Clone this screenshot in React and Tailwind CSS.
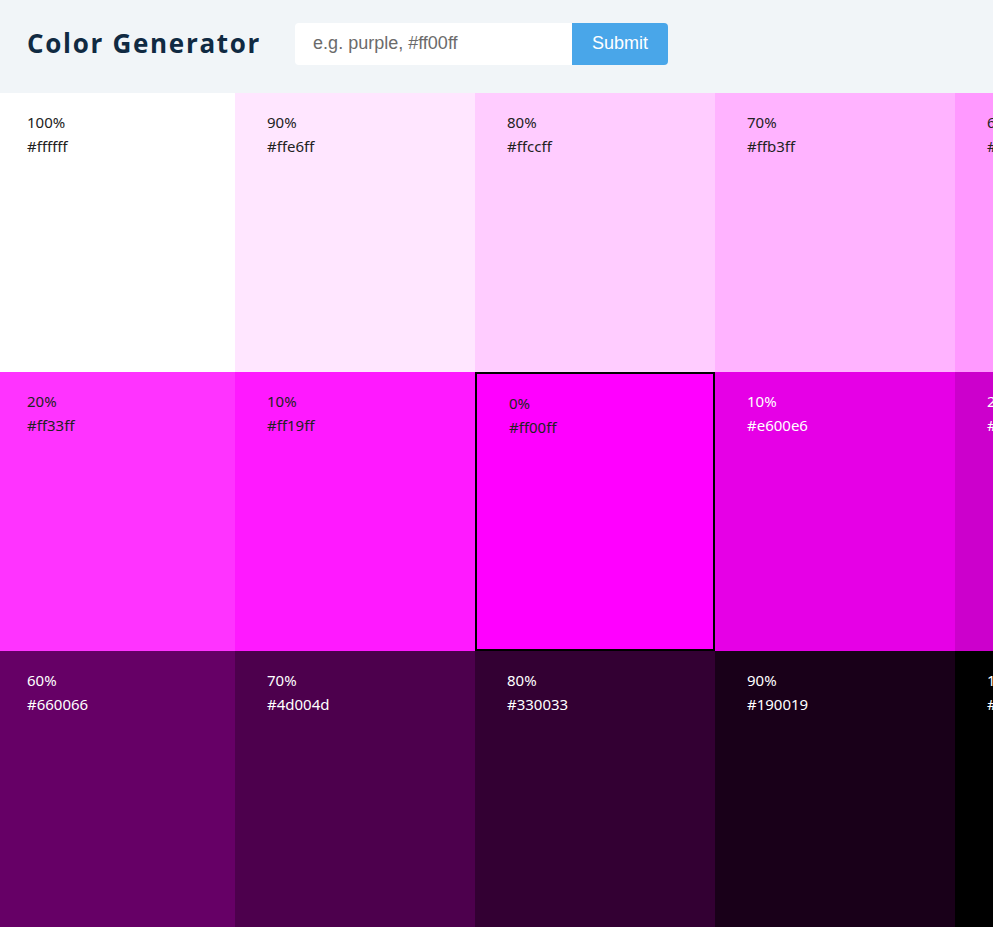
import React from "react";

const base = [255, 0, 255];
function hex(c) {
  return "#" + c.map((v) => v.toString(16).padStart(2, "0")).join("");
}
function build() {
  const out = [];
  for (let i = 10; i >= 1; i--) {
    const w = i / 10;
    const c = base.map((v) => Math.round(v + (255 - v) * w));
    out.push({ pct: i * 10, c: hex(c), type: "tint" });
  }
  out.push({ pct: 0, c: "#ff00ff", type: "base" });
  for (let i = 1; i <= 10; i++) {
    const w = i / 10;
    const c = base.map((v) => Math.round(v * (1 - w)));
    out.push({ pct: i * 10, c: hex(c), type: "shade" });
  }
  return out;
}
const list = build();
const fix = { "#ff1aff": "#ff19ff", "#1a001a": "#190019" };

export default function App() {
  return (
    <div className="min-h-screen w-full overflow-hidden bg-white font-['Noto_Sans','Open_Sans',sans-serif]">
      <header className="flex h-[93px] items-center bg-[#f1f5f8] px-[27px] pb-[6px]">
        <h3 className="mr-[34px] font-['Open_Sans','Noto_Sans',sans-serif] text-[26px] font-bold tracking-[1.7px] text-[#102a42]">
          Color Generator
        </h3>
        <form className="flex" onSubmit={(e) => e.preventDefault()}>
          <input
            type="text"
            placeholder="e.g. purple, #ff00ff"
            className="h-[42px] w-[277px] rounded-l-[4px] bg-white pl-[18px] font-['Liberation_Sans',Arial,sans-serif] text-[18px] text-[#222] outline-none placeholder:text-[#6b6b6b]"
          />
          <button
            type="submit"
            className="h-[42px] w-[96px] rounded-r-[4px] bg-[#49a6e9] font-['Liberation_Sans',Arial,sans-serif] text-[18px] text-white"
          >
            Submit
          </button>
        </form>
      </header>
      <section className="ml-[-5px] grid w-[1920px] grid-cols-[repeat(8,240px)]">
        {list.map((item, idx) => {
          const c = fix[item.c] || item.c;
          const light = item.type !== "shade";
          const isBase = item.type === "base";
          return (
            <article
              key={idx}
              className={
                "h-[279px] px-[32px] pt-[17px] text-[15px] leading-[24px] " +
                (light ? "text-[#222] " : "text-white ") +
                (isBase ? "border-2 border-black" : "")
              }
              style={{ backgroundColor: c }}
            >
              <p>{item.pct}%</p>
              <p>{c}</p>
            </article>
          );
        })}
      </section>
    </div>
  );
}
